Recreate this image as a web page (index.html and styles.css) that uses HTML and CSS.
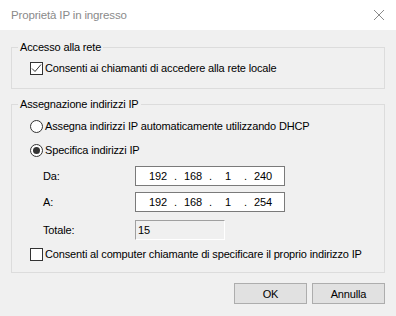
FILE: index.html
```html
<!DOCTYPE html>
<html lang="it">

<head>
    <meta charset="UTF-8">
    <meta name="viewport" content="width=device-width, initial-scale=1.0">
    <title>Proprietà IP in ingresso</title>
    <link rel="stylesheet" href="styles.css">
</head>

<body>
    <div class="dialog">
        <!-- Title bar -->
        <div class="titlebar">
            <span class="title">Proprietà IP in ingresso</span>
            <svg class="close" width="12" height="12" viewBox="0 0 12 12">
                <path d="M1 1 L11 11 M11 1 L1 11" stroke="#8a8a8a" stroke-width="1" fill="none" />
            </svg>
        </div>

        <div class="content">
            <!-- Accesso alla rete -->
            <fieldset class="group first">
                <legend>Accesso alla rete</legend>
                <div class="row">
                    <span class="check checked">
                        <svg width="11" height="11" viewBox="0 0 11 11">
                            <path d="M1 5.5 L4 8.5 L10 1.5" stroke="#333" stroke-width="1" fill="none" />
                        </svg>
                    </span>
                    <span>Consenti ai chiamanti di accedere alla rete locale</span>
                </div>
            </fieldset>

            <!-- Assegnazione indirizzi IP -->
            <fieldset class="group second">
                <legend>Assegnazione indirizzi IP</legend>
                <div class="row gap6">
                    <span class="radio"></span>
                    <span>Assegna indirizzi IP automaticamente utilizzando DHCP</span>
                </div>
                <div class="row gap8">
                    <span class="radio selected"></span>
                    <span>Specifica indirizzi IP</span>
                </div>

                <div class="field gap8">
                    <span class="label">Da:</span>
                    <div class="ipbox">
                        <span class="seg">192</span><span class="dot">.</span>
                        <span class="seg">168</span><span class="dot">.</span>
                        <span class="seg">1</span><span class="dot">.</span>
                        <span class="seg">240</span>
                    </div>
                </div>
                <div class="field gap6">
                    <span class="label">A:</span>
                    <div class="ipbox">
                        <span class="seg">192</span><span class="dot">.</span>
                        <span class="seg">168</span><span class="dot">.</span>
                        <span class="seg">1</span><span class="dot">.</span>
                        <span class="seg">254</span>
                    </div>
                </div>
                <div class="field gap8">
                    <span class="label">Totale:</span>
                    <div class="total">15</div>
                </div>

                <div class="row gap6">
                    <span class="check"></span>
                    <span>Consenti al computer chiamante di specificare il proprio indirizzo IP</span>
                </div>
            </fieldset>

            <!-- Buttons -->
            <div class="buttons">
                <button>OK</button>
                <button>Annulla</button>
            </div>
        </div>
    </div>
</body>

</html>
```

FILE: styles.css
```css
body {
    margin: 0;
    font-family: "Liberation Sans", Arial, sans-serif;
    font-size: 11px;
    letter-spacing: -0.15px;
    color: #000;
    background-color: #f0f0f0;
}

.dialog {
    width: 396px;
    height: 316px;
    background-color: #f0f0f0;
}

.titlebar {
    height: 30px;
    background: white;
    display: flex;
    align-items: center;
    justify-content: space-between;
    padding: 0 11px;
}

.title {
    color: #8a8a8a;
    font-size: 11.5px;
}

.content {
    padding: 0 11px;
}

.group {
    margin: 0;
    padding: 0 0 0 6px;
    border: 1px solid #dcdcdc;
    min-width: 0;
}

.group legend {
    padding: 0 2px;
    line-height: 16px;
}

.group.first {
    margin-top: 9px;
    padding-bottom: 12px;
}

.group.second {
    margin-top: 7px;
    padding-bottom: 10px;
}

.row {
    display: flex;
    align-items: center;
    height: 16px;
    margin-top: 5px;
    padding-left: 12px;
    white-space: nowrap;
}

.gap6 {
    margin-top: 6px;
}

.gap8 {
    margin-top: 8px;
}

.check {
    flex: none;
    width: 11px;
    height: 11px;
    border: 1px solid #333;
    background: white;
    margin-right: 2px;
    display: flex;
    align-items: center;
    justify-content: center;
}

.radio {
    flex: none;
    width: 11px;
    height: 11px;
    border: 1px solid #333;
    border-radius: 50%;
    background: white;
    margin-right: 2px;
    display: flex;
    align-items: center;
    justify-content: center;
}

.radio.selected::after {
    content: "";
    width: 7px;
    height: 7px;
    border-radius: 50%;
    background: #333;
}

.field {
    display: flex;
    align-items: center;
    height: 20px;
    padding-left: 25px;
}

.label {
    width: 92px;
}

.ipbox {
    width: 148px;
    height: 18px;
    border: 1px solid #7a7a7a;
    background: white;
    display: flex;
    align-items: center;
}

.seg {
    width: 30px;
    text-align: center;
}

.seg:first-child {
    margin-left: 7px;
}

.dot {
    width: 5px;
    text-align: center;
}

.total {
    width: 86px;
    height: 18px;
    line-height: 18px;
    padding-left: 2px;
    border: 1px solid #a0a0a0;
    border-right-color: #fff;
    border-bottom-color: #fff;
    background: #f0f0f0;
}

.buttons {
    display: flex;
    justify-content: flex-end;
    gap: 5px;
    margin-top: 10px;
}

.buttons button {
    width: 73px;
    height: 21px;
    background-color: #e1e1e1;
    border: 1px solid #adadad;
    font-family: inherit;
    font-size: 11px;
    letter-spacing: inherit;
    color: #000;
    padding: 0;
}
```
